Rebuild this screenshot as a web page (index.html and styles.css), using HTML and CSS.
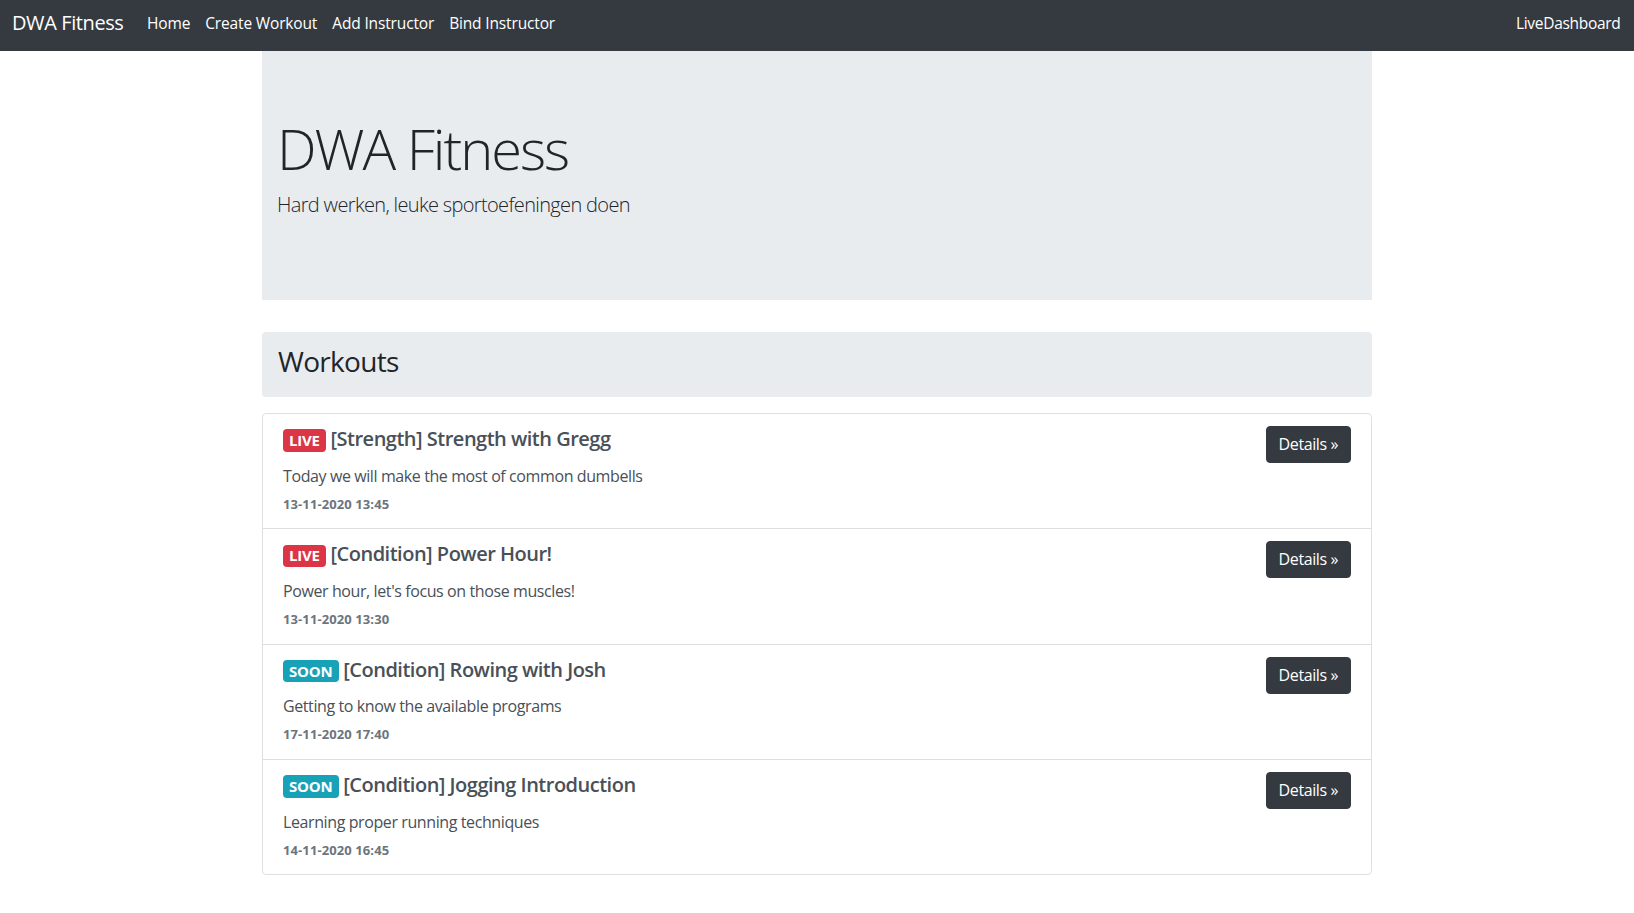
FILE: index.html
```html
<!DOCTYPE html>
<html lang="nl">
<head>
<meta charset="utf-8">
<title>DWA Fitness</title>
<link rel="stylesheet" href="styles.css">
</head>
<body>
<nav class="navbar">
  <a class="brand" href="#">DWA Fitness</a>
  <ul class="nav">
    <li><a class="nav-link" href="#">Home</a></li>
    <li><a class="nav-link" href="#">Create Workout</a></li>
    <li><a class="nav-link" href="#">Add Instructor</a></li>
    <li><a class="nav-link" href="#">Bind Instructor</a></li>
  </ul>
  <a class="nav-link nav-right" href="#">LiveDashboard</a>
</nav>
<main class="container">
  <section class="jumbotron">
    <h1 class="display">DWA Fitness</h1>
    <p class="lead">Hard werken, leuke sportoefeningen doen</p>
  </section>
  <h3 class="section-title">Workouts</h3>
  <div class="list-group">
    <div class="list-item">
      <div class="item-body">
        <h5 class="item-title"><span class="badge badge-live">LIVE</span> [Strength] Strength with Gregg</h5>
        <p class="item-desc">Today we will make the most of common dumbells</p>
        <small class="item-date">13-11-2020 13:45</small>
      </div>
      <a class="btn" href="#">Details &raquo;</a>
    </div>
    <div class="list-item">
      <div class="item-body">
        <h5 class="item-title"><span class="badge badge-live">LIVE</span> [Condition] Power Hour!</h5>
        <p class="item-desc">Power hour, let's focus on those muscles!</p>
        <small class="item-date">13-11-2020 13:30</small>
      </div>
      <a class="btn" href="#">Details &raquo;</a>
    </div>
    <div class="list-item">
      <div class="item-body">
        <h5 class="item-title"><span class="badge badge-soon">SOON</span> [Condition] Rowing with Josh</h5>
        <p class="item-desc">Getting to know the available programs</p>
        <small class="item-date">17-11-2020 17:40</small>
      </div>
      <a class="btn" href="#">Details &raquo;</a>
    </div>
    <div class="list-item">
      <div class="item-body">
        <h5 class="item-title"><span class="badge badge-soon">SOON</span> [Condition] Jogging Introduction</h5>
        <p class="item-desc">Learning proper running techniques</p>
        <small class="item-date">14-11-2020 16:45</small>
      </div>
      <a class="btn" href="#">Details &raquo;</a>
    </div>
  </div>
</main>
</body>
</html>
```
FILE: styles.css
```css
* { box-sizing: border-box; }
html, body { margin: 0; padding: 0; }
body {
  font-family: "Open Sans", "Noto Sans", sans-serif;
  font-size: 16px;
  line-height: 1.5;
  color: #212529;
  background: #fff;
  letter-spacing: -0.4px;
}
a { text-decoration: none; }

.navbar {
  display: flex;
  align-items: center;
  height: 51px;
  padding: 0 6px 5px 12px;
  background: #343a40;
}
.brand {
  color: #fff;
  font-size: 20px;
  line-height: 30px;
  margin-right: 16px;
  letter-spacing: -0.4px;
}
.nav {
  display: flex;
  list-style: none;
  margin: 0;
  padding: 0;
  flex: 1;
}
.nav-link {
  display: block;
  color: #fff;
  font-size: 15.5px;
  line-height: 24px;
  padding: 0 7.5px;
  letter-spacing: -0.15px;
}
.nav-right { letter-spacing: -0.3px; }

.container {
  width: 1110px;
  margin: 0 auto;
}
.jumbotron {
  background: #e9ecef;
  padding: 64px 15px;
  margin-bottom: 32px;
}
.display {
  margin: 0 0 8px;
  font-size: 56px;
  font-weight: 300;
  line-height: 67.2px;
  letter-spacing: -2px;
}
.lead {
  margin: 0 0 16px;
  font-size: 20px;
  font-weight: 300;
  line-height: 30px;
  letter-spacing: -0.65px;
}
.section-title {
  margin: 0 0 16px;
  padding: 13px 16px 19px;
  background: #e9ecef;
  border-radius: 4px;
  font-size: 28px;
  font-weight: 400;
  line-height: 33px;
  letter-spacing: -0.7px;
}

.list-group {
  border: 1px solid rgba(0,0,0,.125);
  border-radius: 4px;
}
.list-item {
  display: flex;
  justify-content: space-between;
  align-items: flex-start;
  padding: 13px 20px 14.5px;
  border-top: 1px solid rgba(0,0,0,.125);
  color: #495057;
}
.list-item:first-child { border-top: 0; }
.item-body { display: flex; flex-direction: column; align-items: flex-start; }
.item-title {
  margin: 0 0 12px;
  font-size: 20px;
  font-weight: 600;
  line-height: 24px;
  letter-spacing: -0.5px;
}
.badge {
  display: inline-block;
  padding: 3.75px 6px;
  font-size: 15px;
  font-weight: 700;
  line-height: 1;
  color: #fff;
  border-radius: 4px;
  vertical-align: baseline;
  letter-spacing: -0.2px;
}
.badge-live { background: #dc3545; }
.badge-soon { background: #17a2b8; }
.item-desc {
  margin: 0 0 6px;
  line-height: 24px;
}
.item-date {
  font-size: 13px;
  font-weight: 700;
  line-height: 20px;
  color: #6c757d;
  letter-spacing: 0.1px;
}
.btn {
  display: inline-block;
  margin-top: -1px;
  padding: 6px 12px;
  border: 1px solid #343a40;
  border-radius: 4px;
  background: #343a40;
  color: #fff;
  font-size: 16px;
  line-height: 23px;
}
```
